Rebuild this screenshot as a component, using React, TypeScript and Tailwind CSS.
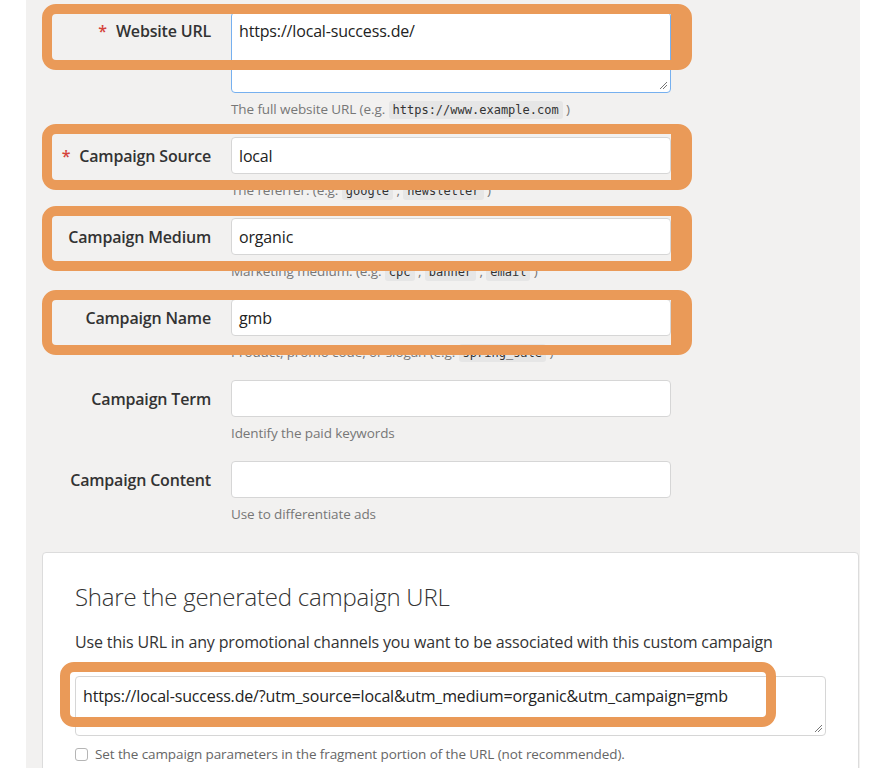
import React from "react";

function Code({ children }: { children: React.ReactNode }) {
  return (
    <span className="inline-block rounded-[3px] bg-[#e6e6e6] px-[4px] font-['DejaVu_Sans_Mono',monospace] text-[12px] leading-[18px] tracking-normal text-[#333]">
      {children}
    </span>
  );
}

function Row({
  label,
  required,
  value,
  textarea,
  help,
  last,
}: {
  label: string;
  required?: boolean;
  value?: string;
  textarea?: boolean;
  help: React.ReactNode;
  last?: boolean;
}) {
  return (
    <div className={`grid grid-cols-[185px_440px] gap-x-[20px] ${last ? "mb-[28px]" : "mb-[18px]"}`}>
      <div className="pt-[7px] text-right text-[16px] font-semibold leading-[24px] tracking-[-0.18px] text-[#333]">
        {required && <span className="mr-[9px] text-[#d5433b]">*</span>}
        {label}
      </div>
      <div>
        {textarea ? (
          <div className="relative h-[81px] rounded-[4px] border border-[#76b0ef] bg-white px-[7px] pt-[6px] text-[16px] leading-[24px] tracking-[-0.16px] text-[#222]">
            {value}
            <svg className="absolute bottom-[2px] right-[2px]" width="10" height="10" viewBox="0 0 10 10">
              <path d="M9 2 L2 9 M9 5 L5 9" stroke="#777" strokeWidth="1" fill="none" />
            </svg>
          </div>
        ) : (
          <div className="flex h-[37px] items-center rounded-[4px] border border-[#d6d6d6] bg-white px-[7px] text-[16px] tracking-[-0.16px] text-[#222]">
            {value}
          </div>
        )}
        <div className="mt-[6px] text-[13.5px] leading-[20px] tracking-[-0.1px] text-[#777]">{help}</div>
      </div>
    </div>
  );
}

export default function App() {
  return (
    <div className="relative h-[768px] w-[888px] overflow-hidden bg-white font-['Open_Sans',sans-serif]">
      <div className="ml-[26px] h-full w-[834px] bg-[#f2f1f0] pt-[12px]">
        <Row
          label="Website URL"
          required
          textarea
          value="https://local-success.de/"
          help={
            <>
              The full website URL (e.g. <Code>https://www.example.com</Code> )
            </>
          }
        />
        <Row
          label="Campaign Source"
          required
          value="local"
          help={
            <>
              The referrer: (e.g. <Code>google</Code> , <Code>newsletter</Code> )
            </>
          }
        />
        <Row
          label="Campaign Medium"
          value="organic"
          help={
            <>
              Marketing medium: (e.g. <Code>cpc</Code> , <Code>banner</Code> , <Code>email</Code> )
            </>
          }
        />
        <Row
          label="Campaign Name"
          value="gmb"
          help={
            <>
              Product, promo code, or slogan (e.g. <Code>spring_sale</Code> )
            </>
          }
        />
        <Row label="Campaign Term" value="" help="Identify the paid keywords" />
        <Row label="Campaign Content" value="" help="Use to differentiate ads" last />

        <div className="ml-[16px] mr-[1px] rounded-[4px] border border-[#dcdcdc] bg-white pb-[40px] pl-[32px] pt-[28px]">
          <div className="text-[24px] font-light leading-[32px] tracking-[-0.22px] text-[#333]">
            Share the generated campaign URL
          </div>
          <div className="mt-[17px] text-[16px] leading-[24px] tracking-[-0.15px] text-[#333]">
            Use this URL in any promotional channels you want to be associated with this custom campaign
          </div>
          <div className="relative mt-[22px] h-[60px] w-[751px] rounded-[4px] border border-[#d6d6d6] bg-white px-[7px] pt-[7px] text-[16px] leading-[24px] tracking-[-0.16px] text-[#222]">
            https://local-success.de/?utm_source=local&amp;utm_medium=organic&amp;utm_campaign=gmb
            <svg className="absolute bottom-[2px] right-[2px]" width="10" height="10" viewBox="0 0 10 10">
              <path d="M9 2 L2 9 M9 5 L5 9" stroke="#777" strokeWidth="1" fill="none" />
            </svg>
          </div>
          <div className="mt-[10px] flex items-center gap-[7px] text-[13.5px] leading-[16px] tracking-[-0.1px] text-[#666]">
            <div className="h-[13px] w-[13px] rounded-[3px] border border-[#b5b5b5] bg-white" />
            Set the campaign parameters in the fragment portion of the URL (not recommended).
          </div>
        </div>
      </div>

      {/* annotation highlights */}
      <div className="absolute left-[42px] top-[4px] h-[66px] w-[650px] rounded-[14px] border-[10px] border-r-[21px] border-[#ea9a58]" />
      <div className="absolute left-[42px] top-[124px] h-[66px] w-[650px] rounded-[14px] border-[10px] border-r-[21px] border-[#ea9a58]" />
      <div className="absolute left-[42px] top-[206px] h-[65px] w-[650px] rounded-[14px] border-[10px] border-r-[21px] border-[#ea9a58]" />
      <div className="absolute left-[42px] top-[290px] h-[65px] w-[650px] rounded-[14px] border-[10px] border-r-[21px] border-[#ea9a58]" />
      <div className="absolute left-[60px] top-[662px] h-[65px] w-[716px] rounded-[14px] border-[10px] border-[#ea9a58]" />
    </div>
  );
}
